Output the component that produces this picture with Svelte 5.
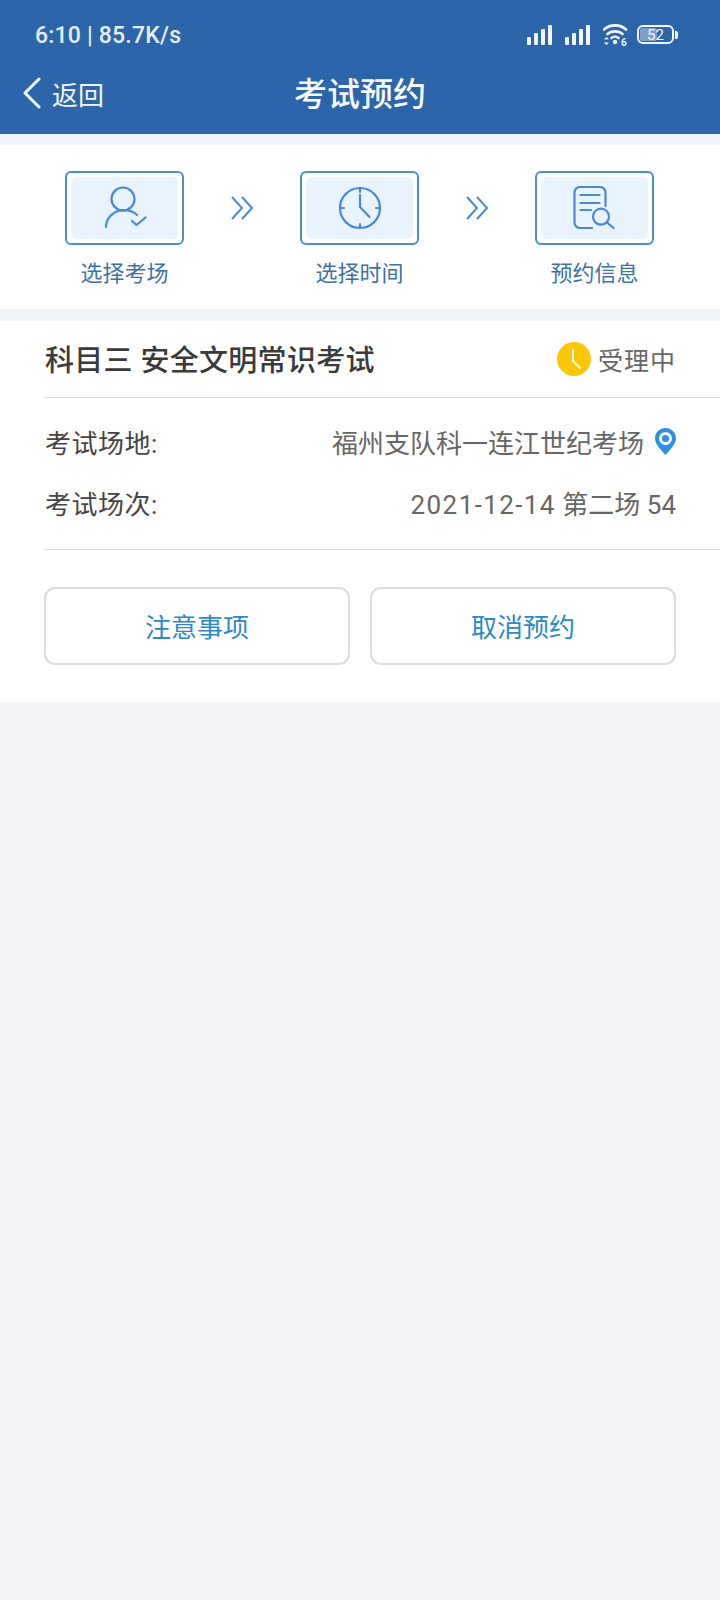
<script>
  const steps = [
    { label: "选择考场", icon: "user" },
    { label: "选择时间", icon: "clock" },
    { label: "预约信息", icon: "doc" },
  ];
</script>

<div class="page">
  <header class="top">
    <div class="status">
      <span class="time">6:10 | 85.7K/s</span>
      <div class="status-icons">
        {#each [0, 1] as s}
          <svg class="signal" width="25" height="20" viewBox="0 0 25 20">
            <rect x="0" y="12" width="4" height="8" rx="1" />
            <rect x="7" y="8" width="4" height="12" rx="1" />
            <rect x="14" y="4" width="4" height="16" rx="1" />
            <rect x="21" y="0" width="4" height="20" rx="1" />
          </svg>
        {/each}
        <svg class="wifi" width="25" height="26" viewBox="0 0 25 26">
          <path d="M1 6.500C7 1 17 1 23 6.500M4.500 11C8.500 7.500 15.500 7.500 19.500 11M8.500 15C10.500 13.300 13.500 13.300 15.500 15" fill="none" stroke="#f2f6fb" stroke-width="2.600" stroke-linecap="round" />
          <circle cx="12" cy="19" r="2.200" fill="#f2f6fb" />
          <path d="M1 16.500l2.500-2.500 2.500 2.500zM1 19.500l2.500 2.500 2.500-2.500z" fill="#f2f6fb" />
          <text x="18" y="23" class="wifi-six">6</text>
        </svg>
        <div class="battery">
          <div class="battery-body">
            <div class="battery-fill"></div>
            <span>52</span>
          </div>
          <div class="battery-cap"></div>
        </div>
      </div>
    </div>
    <nav class="nav">
      <div class="back">
        <svg width="20" height="32" viewBox="0 0 20 32">
          <path d="M17 2L3 16l14 14" fill="none" stroke="#f2f6fb" stroke-width="3" stroke-linecap="round" stroke-linejoin="round" />
        </svg>
        <span>返回</span>
      </div>
      <h1>考试预约</h1>
    </nav>
  </header>

  <section class="steps">
    {#each steps as step, i}
      <div class="step">
        <div class="step-box">
          <div class="step-inner">
            {#if step.icon === "user"}
              <svg width="44" height="44" viewBox="0 0 44 44" class="line">
                <circle cx="20" cy="13" r="11.500" />
                <path d="M3 41C3 32 10 26 17 24.500C24 23.500 30 25 34 29" />
                <path d="M29 35l4.500 4 9-7.500" />
              </svg>
            {:else if step.icon === "clock"}
              <svg width="44" height="44" viewBox="0 0 44 44" class="line">
                <circle cx="22" cy="22" r="20" />
                <path d="M22 2v4M22 38v4M2 22h4M38 22h4" />
                <path d="M22 9v12l9.500 10" />
              </svg>
            {:else}
              <svg width="44" height="44" viewBox="0 0 44 44" class="line">
                <path d="M19 42H7a5.500 5.500 0 0 1-5.500-5.500V6.500A5.500 5.500 0 0 1 7 1h20a5.500 5.500 0 0 1 5.500 5.500V20" />
                <path d="M7.500 9h19M7.500 17h19M7.500 24h10.500" />
                <circle cx="28" cy="30.700" r="8" />
                <path d="M34 36.500l6.500 5.500" />
              </svg>
            {/if}
          </div>
        </div>
        <span class="step-label">{step.label}</span>
      </div>
      {#if i < steps.length - 1}
        <svg class="chevrons" width="24" height="24" viewBox="0 0 24 24">
          <path d="M2 1l10 11L2 23M12 1l10 11-10 11" fill="none" stroke="#4a8ccb" stroke-width="2" />
        </svg>
      {/if}
    {/each}
  </section>

  <section class="card">
    <div class="title-row">
      <h2>科目三 安全文明常识考试</h2>
      <div class="state">
        <svg width="34" height="34" viewBox="0 0 34 34">
          <circle cx="17" cy="17" r="17" fill="#fdc705" />
          <path d="M16 8v11l7 7" fill="none" stroke="#fff" stroke-width="2" stroke-linecap="round" />
        </svg>
        <span>受理中</span>
      </div>
    </div>

    <div class="info">
      <div class="row">
        <span class="key">考试场地:</span>
        <div class="val">
          <span>福州支队科一连江世纪考场</span>
          <svg class="pin" width="21" height="27" viewBox="0 0 21 27">
            <path d="M10.500 0C4.700 0 0 4.600 0 10.300c0 6.300 6.500 12.200 10.500 16.700C14.500 22.500 21 16.600 21 10.300 21 4.600 16.300 0 10.500 0z" fill="#2f8fe6" />
            <circle cx="10.500" cy="10.500" r="6.500" fill="#fff" />
            <circle cx="10.500" cy="10.500" r="3.600" fill="#2f8fe6" />
          </svg>
        </div>
      </div>
      <div class="row">
        <span class="key">考试场次:</span>
        <div class="val"><span><span class="date">2021-12-14</span> 第二场 54</span></div>
      </div>
    </div>

    <div class="actions">
      <button>注意事项</button>
      <button>取消预约</button>
    </div>
  </section>
</div>

<style>
  :global(body) {
    margin: 0;
    background: #f3f4f9;
  }

  .page {
    min-height: 1600px;
    background: #f3f4f9;
    font-family: Roboto, "Noto Sans CJK SC", sans-serif;
  }

  .top {
    background: #2c65a9;
    height: 134px;
    color: #f2f6fb;
  }

  .status {
    height: 68px;
    padding: 0 42px 0 35px;
    display: flex;
    align-items: center;
    justify-content: space-between;
  }

  .time {
    font-size: 23px;
    font-weight: 500;
    letter-spacing: 0.2px;
    color: #e6eef7;
    margin-top: 2px;
  }

  .status-icons {
    display: flex;
    align-items: center;
    gap: 13px;
    margin-top: 1px;
  }

  .signal {
    fill: #f2f6fb;
  }

  .wifi {
    margin: 3px -4px 0 0;
  }

  .wifi-six {
    font-size: 10px;
    font-weight: 700;
    fill: #f2f6fb;
  }

  .battery {
    display: flex;
    align-items: center;
    gap: 1px;
  }

  .battery-body {
    position: relative;
    width: 33px;
    height: 15px;
    border: 2px solid #f2f6fb;
    border-radius: 6px;
    display: flex;
    align-items: center;
    justify-content: center;
    overflow: hidden;
  }

  .battery-fill {
    position: absolute;
    left: 1px;
    top: 1px;
    bottom: 1px;
    width: 17px;
    background: #7c9ecb;
    border-radius: 2px;
  }

  .battery-body span {
    position: relative;
    font-size: 15px;
    color: #f2f6fb;
  }

  .battery-cap {
    width: 3px;
    height: 8px;
    background: #f2f6fb;
    border-radius: 0 2px 2px 0;
  }

  .nav {
    position: relative;
    height: 54px;
    padding: 0 0 0 22px;
    display: flex;
    align-items: center;
    margin-top: -2px;
  }

  .back {
    display: flex;
    align-items: center;
    gap: 10px;
    font-size: 26px;
  }

  .nav h1 {
    position: absolute;
    left: 0;
    right: 0;
    top: 2px;
    margin: 0;
    text-align: center;
    font-size: 33px;
    font-weight: 500;
    line-height: 54px;
    color: #f7f9fc;
  }

  .steps {
    margin-top: 11px;
    height: 164px;
    box-sizing: border-box;
    padding: 26px 66px 0 65px;
    background: #fff;
    display: flex;
    align-items: flex-start;
    justify-content: space-between;
  }

  .step {
    width: 119px;
    display: flex;
    flex-direction: column;
    align-items: center;
    gap: 13px;
  }

  .step-box {
    width: 119px;
    height: 74px;
    box-sizing: border-box;
    border: 2px solid #4b8fc6;
    border-radius: 6px;
    padding: 4px;
  }

  .step-inner {
    height: 100%;
    background: #e8f3fe;
    border-radius: 6px;
    display: flex;
    align-items: center;
    justify-content: center;
  }

  .line {
    fill: none;
    stroke: #4a8ccb;
    stroke-width: 2.200;
    stroke-linecap: round;
    stroke-linejoin: round;
  }

  .step-label {
    font-size: 22px;
    line-height: 32px;
    color: #3f739f;
  }

  .chevrons {
    margin-top: 25px;
  }

  .card {
    margin-top: 12px;
    height: 381px;
    box-sizing: border-box;
    padding-left: 43px;
    background: #fff;
  }

  .title-row {
    height: 77px;
    box-sizing: border-box;
    padding-right: 44px;
    border-bottom: 1px solid #dfe0e3;
    display: flex;
    align-items: center;
    justify-content: space-between;
  }

  h2 {
    margin: 0 0 2px 2px;
    font-size: 29px;
    font-weight: 500;
    letter-spacing: 0.300px;
    color: #3a3a3a;
  }

  .state {
    display: flex;
    align-items: center;
    gap: 7px;
    font-size: 25px;
    letter-spacing: 1px;
    color: #666;
  }

  .info {
    height: 152px;
    box-sizing: border-box;
    padding: 13px 44px 0 2px;
    border-bottom: 1px solid #dfe0e3;
  }

  .row {
    height: 61px;
    display: flex;
    align-items: center;
    justify-content: space-between;
    font-size: 26px;
  }

  .key {
    color: #444;
    letter-spacing: 0.500px;
  }

  .val {
    display: flex;
    align-items: center;
    gap: 11px;
    color: #666;
  }

  .date {
    letter-spacing: 1.400px;
  }

  .actions {
    margin-top: 37px;
    padding: 0 44px 0 1px;
    display: flex;
    gap: 20px;
  }

  button {
    flex: 1;
    height: 78px;
    padding: 0 0 2px;
    background: #fff;
    border: 2px solid #dcdcdc;
    border-radius: 11px;
    font-family: inherit;
    font-size: 26px;
    color: #2b8ac6;
  }
</style>
